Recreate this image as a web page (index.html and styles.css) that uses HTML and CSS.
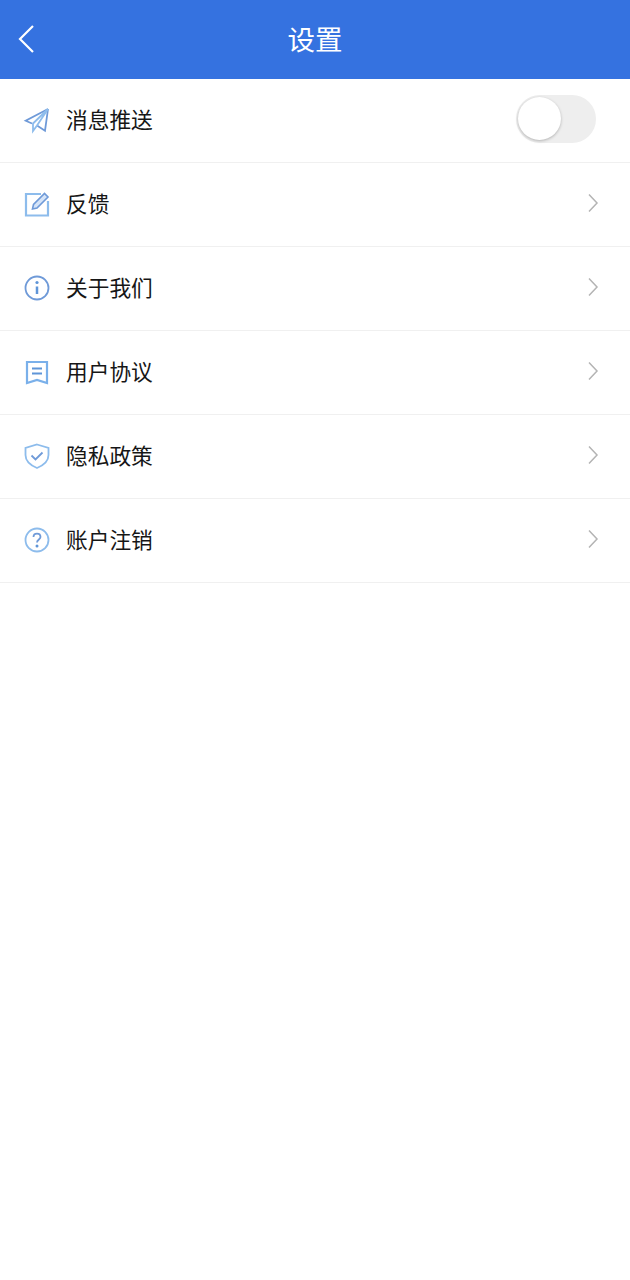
FILE: index.html
```html
<!DOCTYPE html>
<html lang="zh">
<head>
<meta charset="utf-8">
<title>设置</title>
<link rel="stylesheet" href="styles.css">
</head>
<body>
<!-- topo -->
<header class="topbar">
  <svg class="back" width="18" height="30" viewBox="0 0 18 30"><path d="M16 2 L3 15 L16 28"/></svg>
  <div class="topbar-title">设置</div>
</header>

<div class="list">
  <div class="row">
    <svg class="ico" width="28" height="28" viewBox="0 0 28 28">
      <path class="c1" d="M25 3 L2.700 14.700 L9 17.500 M25 3 L22 24.700 L14 19.500"/>
      <path class="c2" d="M25 3 L10 17.500 V25 L14 19.500 L25 3"/>
    </svg>
    <span class="label">消息推送</span>
    <div class="switch"><div class="knob"></div></div>
  </div>
  <div class="row">
    <svg class="ico" width="28" height="28" viewBox="0 0 28 28">
      <path class="c2 thick" d="M18 4 H3 V25.500 H25 V11"/>
      <path class="pen" d="M9.500 19 L10.500 14.500 L21.500 3.500 L25 7 L14 18 Z"/>
    </svg>
    <span class="label">反馈</span>
    <svg class="arrow" width="12" height="20" viewBox="0 0 12 20"><path d="M2 1.500 L10 10 L2 18.500"/></svg>
  </div>
  <div class="row">
    <svg class="ico" width="28" height="28" viewBox="0 0 28 28">
      <circle class="c1" cx="14" cy="14" r="11.500"/>
      <path class="c3" d="M14 12.500 V20"/>
      <circle class="dot" cx="14" cy="8.500" r="1.600"/>
    </svg>
    <span class="label">关于我们</span>
    <svg class="arrow" width="12" height="20" viewBox="0 0 12 20"><path d="M2 1.500 L10 10 L2 18.500"/></svg>
  </div>
  <div class="row">
    <svg class="ico" width="28" height="28" viewBox="0 0 28 28">
      <path class="doc" d="M4 4 H24 V25 L14 22 L4 25 Z"/>
      <path class="c3 thin" d="M9 10.500 H19 M9 15.500 H19"/>
    </svg>
    <span class="label">用户协议</span>
    <svg class="arrow" width="12" height="20" viewBox="0 0 12 20"><path d="M2 1.500 L10 10 L2 18.500"/></svg>
  </div>
  <div class="row">
    <svg class="ico" width="28" height="28" viewBox="0 0 28 28">
      <path class="c2" d="M14 2.500 L25.500 6 V13 C25.500 19.500 20 23.500 14 26 C8 23.500 2.500 19.500 2.500 13 V6 Z"/>
      <path class="c1" d="M8.500 13.500 L12.500 17.500 L19.500 10.500"/>
    </svg>
    <span class="label">隐私政策</span>
    <svg class="arrow" width="12" height="20" viewBox="0 0 12 20"><path d="M2 1.500 L10 10 L2 18.500"/></svg>
  </div>
  <div class="row">
    <svg class="ico" width="28" height="28" viewBox="0 0 28 28">
      <circle class="c2" cx="14" cy="14" r="11.500"/>
      <path class="c1" d="M10.500 11 C10.500 6.500 17.500 6.500 17.500 11 C17.500 13.500 14 13.500 14 16.500"/>
      <circle class="dot" cx="14" cy="20" r="1.500"/>
    </svg>
    <span class="label">账户注销</span>
    <svg class="arrow" width="12" height="20" viewBox="0 0 12 20"><path d="M2 1.500 L10 10 L2 18.500"/></svg>
  </div>
</div>
</body>
</html>
```
FILE: styles.css
```css
body {
    margin: 0;
    background-color: #fff;
    font-family: "Noto Sans CJK SC", "Noto Sans", sans-serif;
    color: #161616;
}
.topbar {
    height: 79px;
    box-sizing: border-box;
    padding-bottom: 4px;
    background-color: #3572e0;
    display: flex;
    align-items: center;
    justify-content: center;
    position: relative;
}
.topbar-title {
    color: #fff;
    font-size: 27.500px;
}
.back {
    position: absolute;
    left: 17px;
    top: 24px;
}
.back path {
    fill: none;
    stroke: #fff;
    stroke-width: 2.200;
}
.row {
    height: 84px;
    box-sizing: border-box;
    border-bottom: 1px solid #f0f0f0;
    display: flex;
    align-items: center;
    padding-left: 23px;
    padding-right: 31px;
    padding-bottom: 2px;
}
.label {
    font-size: 21.700px;
    margin-left: 15px;
    margin-bottom: 2px;
    flex: 1;
}
.ico {
    fill: none;
}
.c1 {
    fill: none;
    stroke: #6f9ad8;
    stroke-width: 1.800;
}
.c2 {
    fill: none;
    stroke: #8dbcec;
    stroke-width: 1.800;
}
.thick {
    stroke-width: 2.200;
}
.c3 {
    fill: none;
    stroke: #5f95d8;
    stroke-width: 2.500;
}
.thin {
    stroke-width: 1.800;
}
.doc {
    fill: none;
    stroke: #7ab0ea;
    stroke-width: 2.200;
}
.pen {
    fill: #d5e4f8;
    stroke: #6f9ad8;
    stroke-width: 1.600;
}
.dot {
    fill: #5f95d8;
}
.arrow {
    margin-bottom: 1px;
}
.arrow path {
    fill: none;
    stroke: #b4b4b4;
    stroke-width: 1.500;
}
.switch {
    width: 80px;
    height: 48px;
    margin-right: 3px;
    margin-bottom: 2px;
    border-radius: 24px;
    background-color: #eeeeee;
    position: relative;
}
.knob {
    position: absolute;
    left: 2px;
    top: 2px;
    width: 43px;
    height: 43px;
    border-radius: 50%;
    background-color: #fff;
    box-shadow: 0 1px 3px rgba(0,0,0,0.25);
}
```
